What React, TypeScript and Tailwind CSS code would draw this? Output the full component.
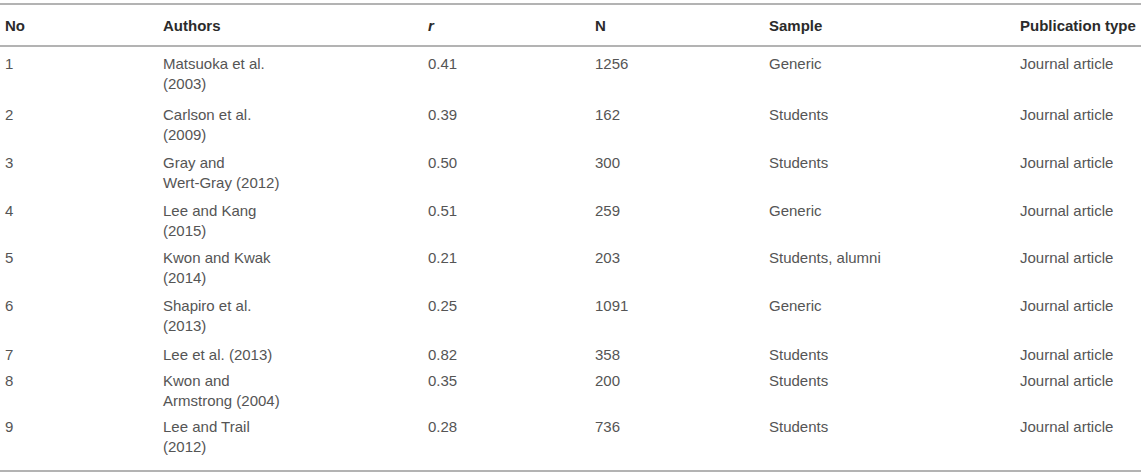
import React from "react";

interface Row {
  no: string;
  authors: string[];
  r: string;
  n: string;
  sample: string;
  type: string;
  pad: string;
}

const rows: Row[] = [
  { no: "1", authors: ["Matsuoka et al.", "(2003)"], r: "0.41", n: "1256", sample: "Generic", type: "Journal article", pad: "pt-[7px] pb-[7px]" },
  { no: "2", authors: ["Carlson et al.", "(2009)"], r: "0.39", n: "162", sample: "Students", type: "Journal article", pad: "py-[4px]" },
  { no: "3", authors: ["Gray and", "Wert-Gray (2012)"], r: "0.50", n: "300", sample: "Students", type: "Journal article", pad: "py-[4px]" },
  { no: "4", authors: ["Lee and Kang", "(2015)"], r: "0.51", n: "259", sample: "Generic", type: "Journal article", pad: "pt-[4px] pb-[3px]" },
  { no: "5", authors: ["Kwon and Kwak", "(2014)"], r: "0.21", n: "203", sample: "Students, alumni", type: "Journal article", pad: "py-[4px]" },
  { no: "6", authors: ["Shapiro et al.", "(2013)"], r: "0.25", n: "1091", sample: "Generic", type: "Journal article", pad: "pt-[4px] pb-[6px]" },
  { no: "7", authors: ["Lee et al. (2013)"], r: "0.82", n: "358", sample: "Students", type: "Journal article", pad: "py-[3px]" },
  { no: "8", authors: ["Kwon and", "Armstrong (2004)"], r: "0.35", n: "200", sample: "Students", type: "Journal article", pad: "pt-[3px] pb-[3px]" },
  { no: "9", authors: ["Lee and Trail", "(2012)"], r: "0.28", n: "736", sample: "Students", type: "Journal article", pad: "pt-[3px] pb-[13px]" },
];

const App = () => {
  return (
    <div className="bg-white w-[1145px] h-[475px] pt-[3px] font-['Liberation_Sans',Arial,sans-serif] text-[15px] leading-[20px]">
      <table className="table-fixed border-collapse w-[1141px] border-t-2 border-b-2 border-[#b3b3b3]">
        <colgroup>
          <col className="w-[158px]" />
          <col className="w-[265px]" />
          <col className="w-[167px]" />
          <col className="w-[174px]" />
          <col className="w-[251px]" />
          <col className="w-[126px]" />
        </colgroup>
        <thead>
          <tr className="border-b-2 border-[#b3b3b3] text-left text-[#2b2b2b]">
            <th className="pl-[5px] pt-[11px] pb-[9px] font-bold">No</th>
            <th className="pl-[5px] pt-[11px] pb-[9px] font-bold">Authors</th>
            <th className="pl-[5px] pt-[11px] pb-[9px] font-bold italic">r</th>
            <th className="pl-[5px] pt-[11px] pb-[9px] font-bold">N</th>
            <th className="pl-[5px] pt-[11px] pb-[9px] font-bold">Sample</th>
            <th className="pl-[5px] pt-[11px] pb-[9px] font-bold whitespace-nowrap">Publication type</th>
          </tr>
        </thead>
        <tbody className="text-[#555] align-top">
          {rows.map((row) => (
            <tr key={row.no}>
              <td className={`pl-[5px] ${row.pad}`}>{row.no}</td>
              <td className={`pl-[5px] ${row.pad}`}>
                {row.authors.map((a) => (
                  <div key={a} className="whitespace-nowrap">{a}</div>
                ))}
              </td>
              <td className={`pl-[5px] ${row.pad}`}>{row.r}</td>
              <td className={`pl-[5px] ${row.pad}`}>{row.n}</td>
              <td className={`pl-[5px] ${row.pad}`}>{row.sample}</td>
              <td className={`pl-[5px] ${row.pad} whitespace-nowrap`}>{row.type}</td>
            </tr>
          ))}
        </tbody>
      </table>
    </div>
  );
};

export default App;
